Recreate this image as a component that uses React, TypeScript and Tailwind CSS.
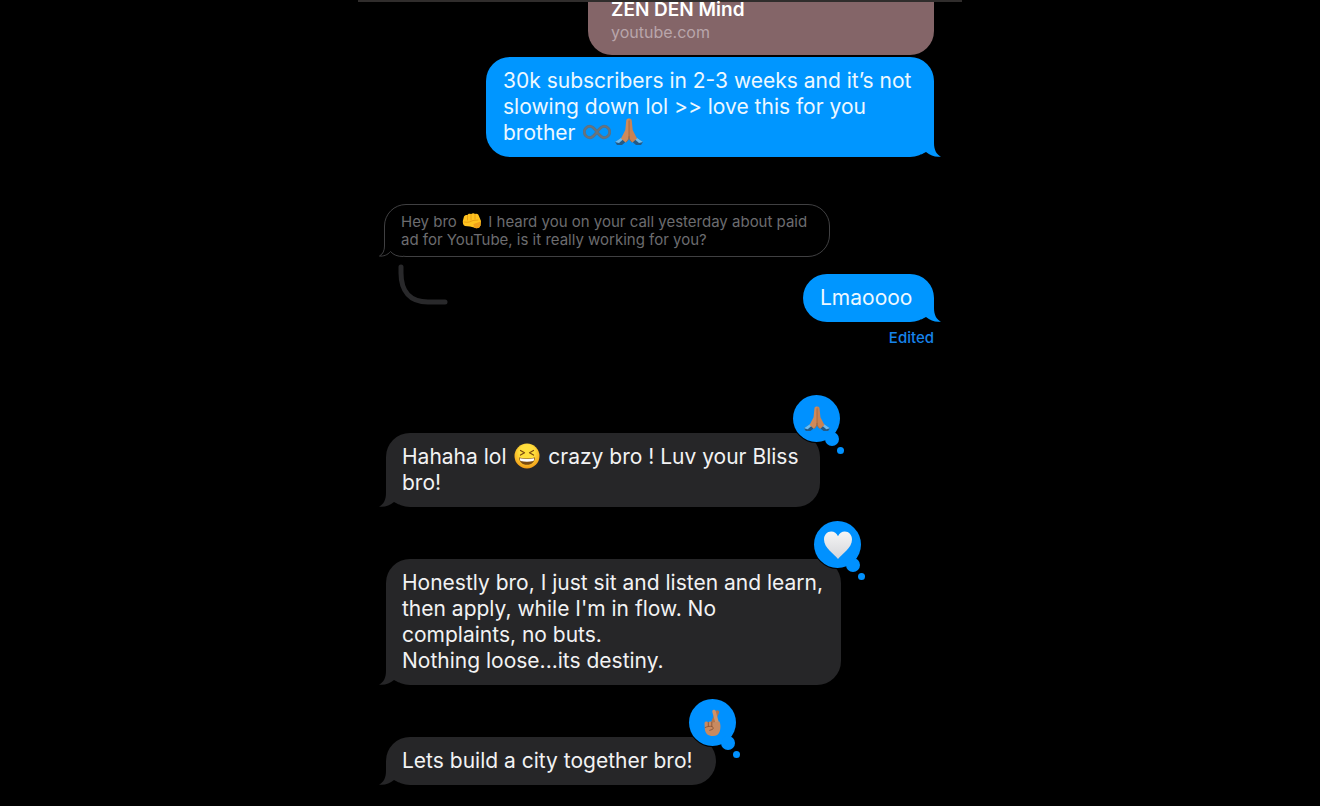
import React from 'react';
import clsx from 'clsx';

type Side = 'in' | 'out';

interface IconProps {
  className?: string;
}

const FoldedHands: React.FC<IconProps> = ({ className }) => (
  <svg viewBox="0 0 28 28" className={className} role="img" aria-label="Folded hands">
    <path d="M0 24 6.500 19.500l4 4.500-3.500 3H2Z" fill="#245a86" />
    <path d="M28 24 21.500 19.500l-4 4.500 3.500 3h5Z" fill="#245a86" />
    <path d="M0 24 6.500 19.500l1.500 2-4 3.500Z" fill="#6cbcf2" />
    <path d="M28 24 21.500 19.500l-1.500 2 4 3.500Z" fill="#6cbcf2" />
    <path d="M14 .5c-2-.3-2.600.8-2.800 2.400L10.300 12 6 20.500l4.500 4c2-1.200 3.200-3 3.500-5.500Z" fill="#cf8a5b" />
    <path d="M14 .5c2-.3 2.600.8 2.800 2.400l.9 9.100 4.300 8.500-4.500 4c-2-1.200-3.200-3-3.500-5.500Z" fill="#c98253" />
    <path d="M14 2.500V19M14 18.500c-.2 2.500-1.200 4.500-3 5.700M14 18.500c.2 2.500 1.200 4.500 3 5.700" fill="none" stroke="#a0643d" strokeWidth="0.8" />
  </svg>
);

const Infinity: React.FC<IconProps> = ({ className }) => (
  <svg viewBox="0 0 28 16" className={className} fill="none" role="img" aria-label="Infinity">
    <path
      d="M14 8C11 4 9.500 2.300 7 2.300a5.700 5.700 0 0 0 0 11.400C9.500 13.700 11 12 14 8s4.500-5.700 7-5.700a5.700 5.700 0 0 1 0 11.400C18.500 13.700 17 12 14 8Z"
      stroke="#50738f"
      strokeWidth="3"
    />
    <path
      d="M14 8C11 4 9.500 2.300 7 2.300a5.700 5.700 0 0 0 0 11.400C9.500 13.700 11 12 14 8s4.500-5.700 7-5.700a5.700 5.700 0 0 1 0 11.400C18.500 13.700 17 12 14 8Z"
      stroke="#6d7378"
      strokeWidth="1.500"
    />
  </svg>
);

const Fist: React.FC<IconProps> = ({ className }) => (
  <svg viewBox="0 0 20 18" className={className} role="img" aria-label="Oncoming fist">
    <path d="M2 4.500C3 3 4.500 2.800 5.500 3 6 1.800 8 1.500 9 2.300 10 1.200 12 1 13 2c2-.8 3.500.2 3.800 1.800L19 9l-.5 4.500-1.500 2.300c-1.800.6-4 .4-5-.4L8 14.500 3 14C1 13.500.8 11 .8 9Z" fill="#ffc31f" />
    <path d="M11.500 12 18.500 9.500l0 4-1.500 2.300c-1.800.6-4 .4-5-.4Z" fill="#f0a01a" />
    <path d="M5.500 3.500V8M9 3v5M13 2.500v4.500M2 10c4 1 7-.5 9-1.500l5-.5" fill="none" stroke="#e0920f" strokeWidth="0.7" strokeLinecap="round" />
  </svg>
);

const Laughing: React.FC<IconProps> = ({ className }) => (
  <svg viewBox="0 0 26 26" className={className} role="img" aria-label="Laughing">
    <defs>
      <radialGradient id="face" cx="0.5" cy="0.35" r="0.65">
        <stop offset="0.45" stopColor="#ffdf3d" />
        <stop offset="1" stopColor="#f19a16" />
      </radialGradient>
    </defs>
    <circle cx="13" cy="13" r="12.500" fill="url(#face)" />
    <path d="m6.500 7.500 4 2.300-4 2.300M19.500 7.500l-4 2.300 4 2.300" fill="none" stroke="#7a4a10" strokeWidth="1.200" strokeLinecap="round" strokeLinejoin="round" />
    <path d="M5 14.500c5.300 1.200 10.700 1.200 16 0-.3 4.500-3.300 7.300-8 7.300s-7.700-2.800-8-7.300Z" fill="#7a4a10" />
    <path d="M5.800 15.200c4.800 1.100 9.600 1.100 14.400 0-.1 1.300-.3 2.100-.8 2.900-4.200.9-8.600.9-12.800 0-.5-.8-.7-1.600-.8-2.900Z" fill="#fff" />
  </svg>
);

const WhiteHeart: React.FC<IconProps> = ({ className }) => (
  <svg viewBox="0 0 30 30" className={className} role="img" aria-label="White heart">
    <defs>
      <linearGradient id="heart" x1="0" y1="0" x2="0" y2="1">
        <stop offset="0" stopColor="#f5f5f5" />
        <stop offset="1" stopColor="#d5d6da" />
      </linearGradient>
    </defs>
    <path d="M15 29C11 24 1 18 1 9.500 1 5 4.200 1.500 8.200 1.500c3 0 5.500 1.800 6.800 4.700 1.300-2.900 3.800-4.700 6.800-4.700 4 0 7.200 3.500 7.200 8C29 18 19 24 15 29Z" fill="url(#heart)" />
  </svg>
);

const CrossedFingers: React.FC<IconProps> = ({ className }) => (
  <svg viewBox="0 0 28 28" className={className} role="img" aria-label="Crossed fingers">
    <path d="M13.500 14 18.500 3" stroke="#b3744c" strokeWidth="3.500" strokeLinecap="round" />
    <path d="M18.500 15 15 2.500" stroke="#cf9368" strokeWidth="3.500" strokeLinecap="round" />
    <path d="M5.500 14c0-1.800 3-2.200 3.800-.6.800-1.300 3-1.200 3.500.2L20.500 12.500c1.200 2.500 1.300 7 .2 10-1.200 3.300-3.200 4.500-6.700 4.500-5 0-8-2.500-8.200-7.500Z" fill="#c88a60" />
    <path d="M9.300 13.500v4M12.800 13.500v3.500M6.200 18.500c2.500-1.200 5-1.500 7-.9 1.500.6 1.300 2.500 0 2.900l-2.500.8" fill="none" stroke="#895436" strokeWidth="0.9" strokeLinecap="round" />
  </svg>
);

const Tail: React.FC<{ side: Side }> = ({ side }) => (
  <svg
    viewBox="0 0 20 24"
    className={clsx('absolute bottom-0 h-6 w-5', side === 'out' ? '-right-[7px]' : '-left-[7px] -scale-x-100')}
    fill="currentColor"
    aria-hidden="true"
  >
    <path d="M0 0h13v10c0 7 2.500 11.500 7 13.500-5.500.8-10.500-.8-15-4.500L0 21.500Z" />
  </svg>
);

const Reaction: React.FC<{ children: React.ReactNode }> = ({ children }) => (
  <div className="absolute -top-[38px] -right-5 flex size-[47px] items-center justify-center rounded-full bg-[#0091ff] ring-1 ring-black">
    {children}
    <span className="absolute right-px -bottom-1 size-[14px] rounded-full bg-[#0091ff]" />
    <span className="absolute -right-1 -bottom-3 size-[7px] rounded-full bg-[#0091ff]" />
  </div>
);

interface BubbleProps {
  side: Side;
  className: string;
  children: React.ReactNode;
  reaction?: React.ReactNode;
}

const Bubble: React.FC<BubbleProps> = ({ side, className, children, reaction }) => (
  <div
    className={clsx(
      'relative rounded-[24px] py-[11px]',
      side === 'out' ? 'self-end bg-[#0096ff] px-[17px] text-[#0096ff]' : 'self-start bg-[#262628] px-4 text-[#262628]',
      className
    )}
  >
    <Tail side={side} />
    <p className={clsx('relative text-[21px] leading-[26px] whitespace-nowrap', side === 'out' ? 'text-[#edf8ff]' : 'text-[#f2f2f3]')}>
      {children}
    </p>
    {reaction && <Reaction>{reaction}</Reaction>}
  </div>
);

const App: React.FC = () => {
  return (
    <div className="min-h-screen bg-black font-['Inter','Liberation_Sans',sans-serif]">
      <main className="mx-auto flex max-w-[604px] flex-col pb-5">
        <div className="h-[2px] bg-[#302d2c]" />

        <div className="flex flex-col px-7">
          {/* Link preview */}
          <a href="https://youtube.com" className="block h-[53px] w-[346px] self-end rounded-b-[24px] bg-[#846568] px-[23px]">
            <span className="block text-[19px] leading-4 font-semibold text-white">ZEN DEN Mind</span>
            <span className="mt-1 block text-base leading-5 text-[#b9a5ab]">youtube.com</span>
          </a>

          <Bubble side="out" className="mt-0.5 w-[448px]">
            30k subscribers in 2-3 weeks and it’s not
            <br />
            slowing down lol &gt;&gt; love this for you
            <br />
            brother <Infinity className="ml-0.5 inline-block h-4 w-7 align-baseline" />
            <FoldedHands className="-mt-1.5 -mb-0.5 ml-1 inline-block size-7 align-middle" />
          </Bubble>

          {/* Quoted message */}
          <div className="relative mt-[47px] -ml-0.5 w-[446px] self-start rounded-[22px] border border-[#404042] px-4 pt-2 pb-[7px]">
            <svg viewBox="0 0 24 24" className="absolute -bottom-px -left-[6px] size-6" fill="none" aria-hidden="true">
              <path d="M0 0h24v24H0Z" fill="#000" />
              <path d="M5.500 0v13c0 4.500-1.500 8-5 10 4 .5 8-1 11-4.500 3 3.500 7 5 12.500 5" stroke="#404042" />
            </svg>
            <p className="relative text-[15px] leading-[18px] whitespace-nowrap text-[#6c6c6f]">
              Hey bro <Fist className="-mt-2 -mb-1 mr-0.5 ml-px inline-block h-[18px] w-5 align-middle" /> I heard you on your call yesterday about paid
              <br />
              ad for YouTube, is it really working for you?
            </p>
          </div>

          <div className="mt-[7px] flex items-start justify-between">
            <svg viewBox="0 0 50 42" className="ml-3 h-[42px] w-[50px]" fill="none" aria-hidden="true">
              <path d="M3 3v6c0 18 9 29 27 29h17" stroke="#29292b" strokeWidth="5" strokeLinecap="round" />
            </svg>
            <div className="flex flex-col items-end pt-[10px]">
              <Bubble side="out" className="w-[131px]">Lmaoooo</Bubble>
              <span className="mt-2 text-[15px] leading-4 font-medium text-[#1683ea]">Edited</span>
            </div>
          </div>

          <Bubble side="in" className="mt-[87px] w-[434px]" reaction={<FoldedHands className="size-[26px]" />}>
            Hahaha lol <Laughing className="-mt-1.5 -mb-0.5 mr-0.5 ml-0.5 inline-block size-[26px] align-middle" /> crazy bro ! Luv your Bliss
            <br />
            bro!
          </Bubble>

          <Bubble side="in" className="mt-[52px] w-[455px]" reaction={<WhiteHeart className="size-[30px]" />}>
            Honestly bro, I just sit and listen and learn,
            <br />
            then apply, while I'm in flow. No
            <br />
            complaints, no buts.
            <br />
            Nothing loose...its destiny.
          </Bubble>

          <Bubble side="in" className="mt-[52px] w-[330px]" reaction={<CrossedFingers className="size-7" />}>
            Lets build a city together bro!
          </Bubble>
        </div>
      </main>
    </div>
  );
};

export default App;
